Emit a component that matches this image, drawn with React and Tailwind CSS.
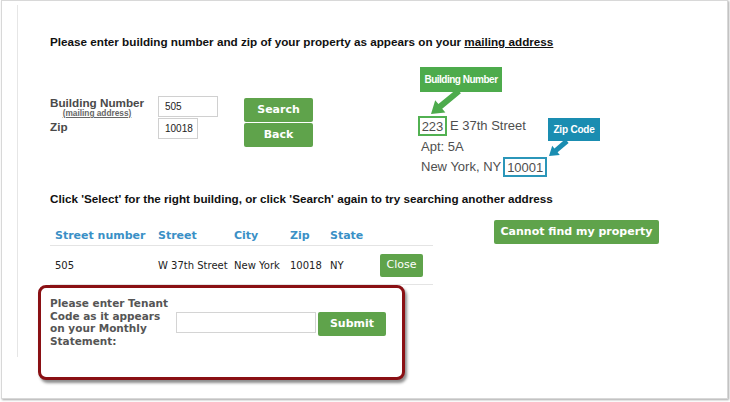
import React from "react";

const arial = "font-['Liberation_Sans',Arial,sans-serif]";
const verdana = "font-['DejaVu_Sans',Verdana,sans-serif]";

function GreenButton({ className = "", children }) {
  return (
    <div
      className={`flex items-center justify-center rounded-[2px] bg-[#5fa34b] text-white ${verdana} ${className}`}
    >
      {children}
    </div>
  );
}

function Annotation() {
  return (
    <div className={`relative w-[190px] h-[110px] pt-[49px] text-[13px] text-[#4f4f4f] ${arial}`}>
      {/* arrows */}
      <svg
        className="absolute left-0 top-0"
        width="190"
        height="110"
        viewBox="418 67 190 110"
      >
        <polygon
          points="460.9,93.3 442.2,108.7 445.4,112.6 431,114 435.2,100.2 438.4,104.1 457.1,88.7"
          fill="#4dab4c"
        />
        <polygon
          points="568.6,142.9 557.6,152.2 559.8,154.9 549,156 552.2,145.7 554.4,148.4 565.4,139.1"
          fill="#1a8db1"
        />
      </svg>
      <div className="absolute left-[2px] top-0 w-[82px] h-[25px] bg-[#4dab4c] flex items-center justify-center text-white text-[10px] font-bold tracking-[-0.5px]">
        Building Number
      </div>
      <div className="absolute left-[130px] top-[51px] w-[52px] h-[23px] bg-[#1a8db1] flex items-center justify-center text-white text-[10px] font-bold tracking-[-0.2px]">
        Zip Code
      </div>
      <div className="flex items-center h-[20px]">
        <div className="w-[29px] h-[20px] border-2 border-[#52b152] flex items-center justify-center leading-none">
          223
        </div>
        <span className="ml-[3px]">E 37th Street</span>
      </div>
      <div className="flex items-center h-[21px] pl-[3px]">Apt: 5A</div>
      <div className="flex items-center h-[20px] pl-[3px]">
        <span>New York, NY</span>
        <div className="ml-[2px] w-[44px] h-[20px] border-2 border-[#2b96b9] flex items-center justify-center leading-none">
          10001
        </div>
      </div>
    </div>
  );
}

export default function App() {
  return (
    <div className="w-[730px] h-[402px] bg-white overflow-hidden pl-px">
      <div className="w-[727px] h-[399px] border border-[#d8d8d8] shadow-[1px_1px_2px_rgba(0,0,0,0.35)] bg-white flex flex-col">
        <div className="ml-[15px] mt-[4px] h-[352px] shrink-0 border-l border-[#e6e6e6] pl-[32px] flex flex-col items-start">
          <div className={`mt-[30px] text-[11.7px] leading-[14px] font-bold text-[#111] ${arial}`}>
            Please enter building number and zip of your property as appears on your{" "}
            <span className="underline">mailing address</span>
          </div>

          <div className="mt-[18px] flex items-start">
            <div className="w-[368px] mt-[29px] flex items-start">
              <div className={`w-[108px] text-[#4a4a4a] ${arial}`}>
                <div className="text-[11.7px] leading-[13px] font-bold">Building Number</div>
                <div className="w-[94px] text-center text-[8.3px] leading-[9px] underline font-bold text-[#666]">
                  (mailing address)
                </div>
                <div className="mt-[2px] text-[11.7px] leading-[13px] font-bold">Zip</div>
              </div>
              <div className={`flex flex-col text-[10px] text-[#222] ${arial}`}>
                <div className="w-[60px] h-[21px] border border-[#d0d0d0] flex items-center pl-[6px]">
                  505
                </div>
                <div className="mt-px w-[40px] h-[21px] border border-[#d0d0d0] flex items-center pl-[6px]">
                  10018
                </div>
              </div>
              <div className="ml-[26px] mt-[2px] flex flex-col">
                <GreenButton className="w-[69px] h-[24px] text-[11px] font-bold">Search</GreenButton>
                <GreenButton className="mt-px w-[69px] h-[24px] text-[11px] font-bold">Back</GreenButton>
              </div>
            </div>
            <Annotation />
          </div>

          <div className={`mt-[15px] text-[11.7px] leading-[14px] font-bold text-[#111] ${arial}`}>
            Click 'Select' for the right building, or click 'Search' again to try searching another address
          </div>

          <div className="mt-[14px] flex items-start">
            <div className={`w-[383px] ${verdana}`}>
              <div className="grid grid-cols-[108px_76px_56px_40px_50px_53px] h-[26px] border-b border-[#e4e4e4] pt-[9px] text-[11px] leading-[14px] font-bold text-[#3a90c6]">
                <div className="pl-[5px]">Street number</div>
                <div>Street</div>
                <div>City</div>
                <div>Zip</div>
                <div>State</div>
                <div></div>
              </div>
              <div className="grid grid-cols-[108px_76px_56px_40px_50px_53px] items-center h-[39px] border-b border-[#e4e4e4] text-[10px] text-[#222]">
                <div className="pl-[5px]">505</div>
                <div>W 37th Street</div>
                <div>New York</div>
                <div>10018</div>
                <div>NY</div>
                <div>
                  <GreenButton className="w-[43px] h-[23px] text-[11px]">Close</GreenButton>
                </div>
              </div>
            </div>
            <GreenButton className="ml-[61px] w-[165px] h-[24px] text-[11px] font-bold">
              Cannot find my property
            </GreenButton>
          </div>

          <div className="-ml-[12px] w-[367px] h-[95px] shrink-0 border-[3px] border-[#8a1014] rounded-[8px] shadow-[2px_3px_3px_rgba(0,0,0,0.45)] bg-white pl-[9px] pt-[9px] flex items-start">
            <div className={`w-[126px] text-[10.5px] leading-[12.5px] font-bold text-[#555] ${verdana}`}>
              Please enter Tenant Code as it appears on your Monthly Statement:
            </div>
            <div className="mt-[15px] w-[140px] h-[21px] border border-[#d4d4d4]"></div>
            <GreenButton className="mt-[15px] ml-[2px] w-[68px] h-[24px] text-[11px] font-bold">
              Submit
            </GreenButton>
          </div>
        </div>
      </div>
    </div>
  );
}
